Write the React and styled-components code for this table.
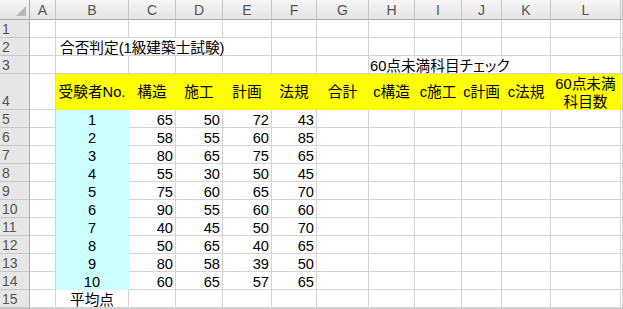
import React from 'react';
import styled, { createGlobalStyle } from 'styled-components';

const GlobalStyle = createGlobalStyle`
  html, body {
    margin: 0;
    padding: 0;
    background: #ffffff;
    overflow: hidden;
  }
`;

// column M and row 16 are only a sliver at the window edge
const COLS = ['A', 'B', 'C', 'D', 'E', 'F', 'G', 'H', 'I', 'J', 'K', 'L', ''];
const WIDTHS = [26, 73, 47, 47, 49, 45, 52, 46, 47, 40, 49, 70, 2];
const HEIGHTS = [18, 18, 18, 36, 18, 18, 18, 18, 18, 18, 18, 18, 18, 18, 18, 1];

const scores = [
  [1, 65, 50, 72, 43],
  [2, 58, 55, 60, 85],
  [3, 80, 65, 75, 65],
  [4, 55, 30, 50, 45],
  [5, 75, 60, 65, 70],
  [6, 90, 55, 60, 60],
  [7, 40, 45, 50, 70],
  [8, 50, 65, 40, 65],
  [9, 80, 58, 39, 50],
  [10, 60, 65, 57, 65],
];

const heads = ['受験者No.', '構造', '施工', '計画', '法規', '合計', 'c構造', 'c施工', 'c計画', 'c法規'];

const YELLOW = '#ffff00';
const CYAN = '#ccffff';

const Sheet = styled.div`
  display: grid;
  grid-template-columns: 30px ${WIDTHS.map(w => `${w}px`).join(' ')};
  grid-template-rows: 20px ${HEIGHTS.map(h => `${h}px`).join(' ')};
  font-family: 'Liberation Sans', 'Noto Sans CJK JP', sans-serif;
  font-size: 14.67px;
  color: #000;
  overflow: hidden;
`;

const Corner = styled.div`
  position: relative;
  background: linear-gradient(#f6f6f6, #e3e3e3);
  border-right: 1px solid #a9a9a9;
  border-bottom: 1px solid #a9a9a9;
  box-sizing: border-box;
  &::after {
    content: '';
    position: absolute;
    right: 3px;
    bottom: 3px;
    border-style: solid;
    border-width: 0 0 10px 10px;
    border-color: transparent transparent #b8b8b8 transparent;
  }
`;

const ColHead = styled.div`
  box-sizing: border-box;
  background: linear-gradient(#f7f7f7, #e4e4e4);
  border-right: 1px solid #c6c6c6;
  border-bottom: 1px solid #a9a9a9;
  display: flex;
  align-items: center;
  justify-content: center;
  font-size: 14px;
  line-height: 16px;
  color: #555;
  overflow: hidden;
`;

const RowHead = styled.div`
  box-sizing: border-box;
  background: #e6e6e6;
  border-right: 1px solid #a9a9a9;
  border-bottom: 1px solid #c6c6c6;
  display: flex;
  align-items: flex-end;
  padding: 0 0 0 2px;
  font-size: 14px;
  line-height: 15px;
  color: #555;
  overflow: hidden;
`;

const Cell = styled.div`
  box-sizing: border-box;
  grid-column: ${p => (p.$span ? `span ${p.$span}` : 'auto')};
  background: ${p => p.$fill || 'transparent'};
  border-right: 1px solid ${p => p.$fill || '#d4d4d4'};
  border-bottom: 1px solid ${p => p.$fill || '#d4d4d4'};
  display: flex;
  align-items: ${p => (p.$middle ? 'center' : 'flex-end')};
  justify-content: ${p =>
    p.$align === 'right' ? 'flex-end' : p.$align === 'center' ? 'center' : 'flex-start'};
  text-align: center;
  padding-left: ${p => (p.$align === 'left' ? `${p.$indent ?? 4}px` : '0')};
  padding-right: ${p => (p.$align === 'right' ? '2px' : '0')};
  line-height: ${p => (p.$middle ? '18px' : '13px')};
  white-space: nowrap;
`;

const Note = styled.span`
  font-feature-settings: 'palt';
`;

const Wrapped = styled.span`
  white-space: normal;
  line-height: 18px;
  padding-top: 2px;
`;

function emptyCells(count, key) {
  return Array.from({ length: count }, (_, i) => <Cell key={`${key}-${i}`} />);
}

export default function App() {
  return (
    <>
      <GlobalStyle />
      <Sheet>
        <Corner />
        {COLS.map((c, i) => <ColHead key={i}>{c}</ColHead>)}

        {/* row 1 */}
        <RowHead>1</RowHead>
        {emptyCells(13, 'r1')}

        {/* row 2: title spills over B..E */}
        <RowHead>2</RowHead>
        <Cell />
        <Cell $span={4} $align="left">合否判定(1級建築士試験)</Cell>
        {emptyCells(8, 'r2')}

        {/* row 3 */}
        <RowHead>3</RowHead>
        {emptyCells(7, 'r3a')}
        <Cell $span={4} $align="left" $indent={1}>
          <Note>60点未満科目チェック</Note>
        </Cell>
        {emptyCells(2, 'r3b')}

        {/* row 4: headers */}
        <RowHead>4</RowHead>
        <Cell />
        {heads.map(h => (
          <Cell key={h} $fill={YELLOW} $align="center" $middle>{h}</Cell>
        ))}
        <Cell $fill={YELLOW} $align="center" $middle>
          <Wrapped>60点未満<br />科目数</Wrapped>
        </Cell>
        <Cell />

        {scores.map((r, i) => (
          <React.Fragment key={r[0]}>
            <RowHead>{i + 5}</RowHead>
            <Cell />
            <Cell $fill={CYAN} $align="center">{r[0]}</Cell>
            {r.slice(1).map((v, j) => (
              <Cell key={j} $align="right">{v}</Cell>
            ))}
            {emptyCells(7, `d${i}`)}
          </React.Fragment>
        ))}

        {/* row 15 */}
        <RowHead>15</RowHead>
        <Cell />
        <Cell $align="center">平均点</Cell>
        {emptyCells(11, 'r15')}

        <RowHead />
        {emptyCells(13, 'r16')}
      </Sheet>
    </>
  );
}
